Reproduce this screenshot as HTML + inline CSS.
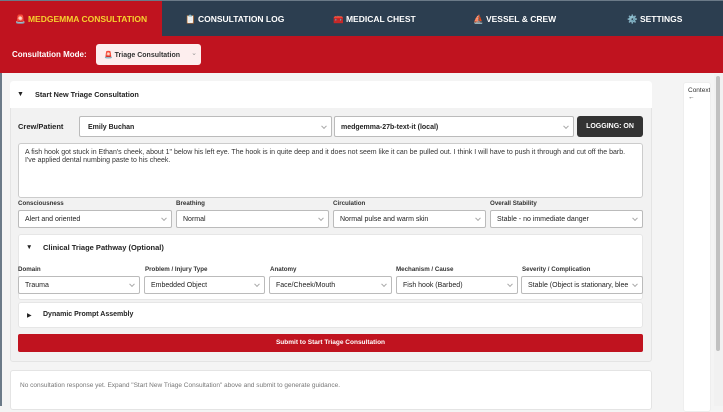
<!DOCTYPE html>
<html><head><style>
*{box-sizing:border-box;margin:0;padding:0}
body{width:723px;height:406px;overflow:hidden;font-family:"Liberation Sans",sans-serif;background:#f4f4f4;position:relative;font-size:7px;color:#222}
.nav{position:absolute;left:0;top:0;width:723px;height:36px;background:#2c3e50;border-top:1px solid #6b7a88}
.tab{position:absolute;top:0;height:36px;line-height:36px;color:#fff;font-weight:bold;font-size:8.5px}
.red{position:absolute;left:0;top:36px;width:723px;height:37px;background:#c0131f}
.abs{position:absolute}
.sel{position:absolute;background:#fff;border:1px solid #bbb;border-radius:2px;height:18px;display:flex;align-items:center;padding-left:6px;padding-top:1px;font-size:7px;color:#222;white-space:nowrap;overflow:hidden}
.sel i{position:absolute;right:5px;top:50%;width:4px;height:4px;border-right:1px solid #aaa;border-bottom:1px solid #aaa;transform:translateY(-70%) rotate(45deg)}
.lbl{position:absolute;font-size:6.2px;font-weight:bold;color:#333}
.card{position:absolute;background:#fff;border-radius:3px;border:1px solid #e6e6e6}
</style></head><body>
<div class="nav">
<div class="tab" style="left:0;width:162px;background:#c0131f;color:#f7d12e;padding-left:15px">🚨 MEDGEMMA CONSULTATION</div>
<div class="tab" style="left:185px">📋 CONSULTATION LOG</div>
<div class="tab" style="left:333px">🧰 MEDICAL CHEST</div>
<div class="tab" style="left:473px">⛵ VESSEL &amp; CREW</div>
<div class="tab" style="left:627px">⚙️ SETTINGS</div>
</div>
<div class="red">
<div class="abs" style="left:12px;top:14px;color:#fff;font-weight:bold;font-size:8px">Consultation Mode:</div>
<div class="abs" style="left:96px;top:8px;width:105px;height:21px;background:#fdeeee;border-radius:3px;line-height:23px;padding-left:8px;font-size:7px;color:#333;font-weight:bold">🚨 Triage Consultation<span style="position:absolute;right:4px;color:#999;font-weight:normal;line-height:20px">⌄</span></div>
</div>
<div class="abs" style="left:0;top:73px;width:2px;height:333px;background:#6b7a88"></div>
<div class="abs" style="left:10px;top:81px;width:642px;height:281px;background:#f2f2f2;border:1px solid #e4e4e4;border-radius:3px"></div>
<div class="abs" style="left:10px;top:81px;width:642px;height:27px;background:#fff;border-radius:3px 3px 0 0"></div>
<div class="abs" style="left:17px;top:91px;font-size:7px">▼</div>
<div class="abs" style="left:35px;top:90px;font-size:7.3px;font-weight:bold">Start New Triage Consultation</div>
<div class="abs" style="left:18px;top:122px;font-size:7.5px;font-weight:bold">Crew/Patient</div>
<div class="sel" style="left:79px;top:116px;width:253px;height:21px;font-weight:bold;padding-left:8px">Emily Buchan<i></i></div>
<div class="sel" style="left:334px;top:116px;width:240px;height:21px;font-weight:bold">medgemma-27b-text-it (local)<i></i></div>
<div class="abs" style="left:577px;top:116px;width:66px;height:21px;background:#333;border-radius:3px;color:#fff;font-weight:bold;font-size:7px;line-height:21px;text-align:center">LOGGING: ON</div>
<div class="abs" style="left:18px;top:143px;width:625px;height:55px;background:#fff;border:1px solid #ccc;border-radius:3px;padding:5px 6px;font-size:7px;line-height:8px;color:#333;white-space:nowrap;overflow:hidden">A fish hook got stuck in Ethan's cheek, about 1" below his left eye. The hook is in quite deep and it does not seem like it can be pulled out. I think I will have to push it through and cut off the barb.<br>I've applied dental numbing paste to his cheek.</div>
<div class="lbl" style="left:18px;top:200px">Consciousness</div>
<div class="lbl" style="left:176px;top:200px">Breathing</div>
<div class="lbl" style="left:333px;top:200px">Circulation</div>
<div class="lbl" style="left:490px;top:200px">Overall Stability</div>
<div class="sel" style="left:18px;top:210px;width:154px">Alert and oriented<i></i></div>
<div class="sel" style="left:176px;top:210px;width:153px">Normal<i></i></div>
<div class="sel" style="left:333px;top:210px;width:153px">Normal pulse and warm skin<i></i></div>
<div class="sel" style="left:490px;top:210px;width:153px">Stable - no immediate danger<i></i></div>
<div class="card" style="left:18px;top:234px;width:625px;height:66px"></div>
<div class="abs" style="left:26px;top:244px;font-size:6.5px">▼</div>
<div class="abs" style="left:43px;top:243px;font-size:7.5px;font-weight:bold">Clinical Triage Pathway (Optional)</div>
<div class="lbl" style="left:18px;top:266px">Domain</div>
<div class="lbl" style="left:145px;top:266px">Problem / Injury Type</div>
<div class="lbl" style="left:270px;top:266px">Anatomy</div>
<div class="lbl" style="left:396px;top:266px">Mechanism / Cause</div>
<div class="lbl" style="left:522px;top:266px">Severity / Complication</div>
<div class="sel" style="left:18px;top:276px;width:122px">Trauma<i></i></div>
<div class="sel" style="left:144px;top:276px;width:121px">Embedded Object<i></i></div>
<div class="sel" style="left:269px;top:276px;width:123px">Face/Cheek/Mouth<i></i></div>
<div class="sel" style="left:396px;top:276px;width:122px">Fish hook (Barbed)<i></i></div>
<div class="sel" style="left:521px;top:276px;width:122px">Stable (Object is stationary, blee<i></i></div>
<div class="card" style="left:18px;top:302px;width:625px;height:26px"></div>
<div class="abs" style="left:27px;top:312px;font-size:6px">▶</div>
<div class="abs" style="left:43px;top:311px;font-size:7px;font-weight:bold">Dynamic Prompt Assembly</div>
<div class="abs" style="left:18px;top:334px;width:625px;height:18px;background:#c0131f;border-radius:2px;color:#fff;font-weight:bold;font-size:6.5px;line-height:18px;text-align:center">Submit to Start Triage Consultation</div>
<div class="abs" style="left:10px;top:370px;width:642px;height:40px;background:#fff;border:1px solid #e4e4e4;border-radius:3px"></div>
<div class="abs" style="left:20px;top:382px;font-size:6.5px;color:#777">No consultation response yet. Expand "Start New Triage Consultation" above and submit to generate guidance.</div>
<div class="abs" style="left:683px;top:82px;width:28px;height:330px;background:#fff;border-radius:3px;border:1px solid #eee;overflow:hidden">
<div style="padding:4px 0 0 4px;font-size:6.5px;color:#333;white-space:nowrap">Context<br>←</div></div>
<div class="abs" style="left:714px;top:74px;width:9px;height:332px;background:#f1f1f1"></div>
<div class="abs" style="left:716px;top:76px;width:4px;height:275px;background:#c1c1c1;border-radius:2px"></div>
</body></html>
